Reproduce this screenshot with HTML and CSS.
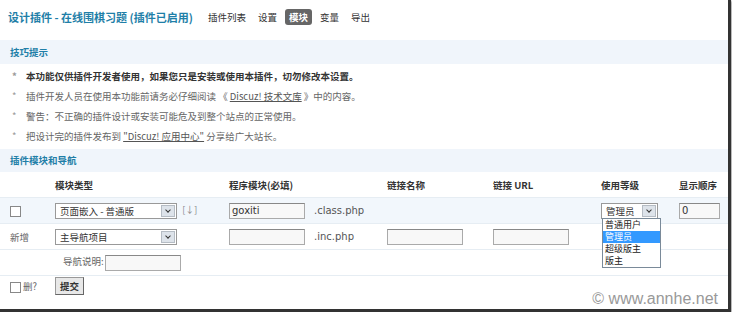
FILE: index.html
```html
<!DOCTYPE html>
<html lang="zh-CN">
<head>
  <meta charset="UTF-8" />
  <title>设计插件 - 在线围棋习题</title>
  <link rel="stylesheet" href="styles.css">
</head>
<body>
  <div class="frame">
    <div class="topbar">
      <h3 class="page-title">设计插件 - 在线围棋习题 (插件已启用)</h3>
      <ul class="tabs">
        <li>插件列表</li>
        <li>设置</li>
        <li class="current">模块</li>
        <li>变量</li>
        <li>导出</li>
      </ul>
    </div>

    <div class="band">技巧提示</div>
    <ul class="tips">
      <li class="strong">本功能仅供插件开发者使用，如果您只是安装或使用本插件，切勿修改本设置。</li>
      <li>插件开发人员在使用本功能前请务必仔细阅读 《 <a href="#">Discuz! 技术文库</a> 》中的内容。</li>
      <li>警告：不正确的插件设计或安装可能危及到整个站点的正常使用。</li>
      <li>把设计完的插件发布到 <a href="#">"Discuz! 应用中心"</a> 分享给广大站长。</li>
    </ul>

    <div class="band">插件模块和导航</div>
    <table class="modules">
      <colgroup>
        <col class="c-check"><col class="c-type"><col class="c-prog"><col class="c-name"><col class="c-url"><col class="c-level"><col class="c-order">
      </colgroup>
      <tr class="head">
        <th></th>
        <th>模块类型</th>
        <th>程序模块(必填)</th>
        <th>链接名称</th>
        <th>链接 URL</th>
        <th>使用等级</th>
        <th>显示顺序</th>
      </tr>
      <tr class="row hover">
        <td class="first"><span class="checkbox"></span></td>
        <td><span class="select wide">页面嵌入 - 普通版<span class="arrow"></span></span> <span class="order">[↓]</span></td>
        <td><span class="input">goxiti</span><span class="ext">.class.php</span></td>
        <td></td>
        <td></td>
        <td class="level-cell">
          <span class="select small">管理员<span class="arrow"></span></span>
          <ul class="droplist">
            <li>普通用户</li>
            <li class="picked">管理员</li>
            <li>超级版主</li>
            <li>版主</li>
          </ul>
        </td>
        <td><span class="input tiny">0</span></td>
      </tr>
      <tr class="row">
        <td class="first gray">新增</td>
        <td><span class="select wide">主导航项目<span class="arrow"></span></span></td>
        <td><span class="input"></span><span class="ext">.inc.php</span></td>
        <td><span class="input"></span></td>
        <td><span class="input"></span></td>
        <td></td>
        <td></td>
      </tr>
      <tr class="row">
        <td></td>
        <td class="navdesc"><span class="gray">导航说明:</span><span class="input"></span></td>
        <td></td><td></td><td></td><td></td><td></td>
      </tr>
      <tr class="foot">
        <td class="first"><span class="checkbox"></span><span class="gray">删?</span></td>
        <td><span class="button">提交</span></td>
        <td></td><td></td><td></td><td></td><td></td>
      </tr>
    </table>
    <div class="watermark">© www.annhe.net</div>
  </div>
</body>
</html>
```

FILE: styles.css
```css
body {
  margin: 0;
  background: #fff;
  font-family: "Noto Sans CJK SC", "DejaVu Sans", sans-serif;
  font-size: 9.5px;
  color: #333;
}
.frame {
  position: relative;
  width: 728px;
  height: 309px;
  border-right: 3px solid #333;
  border-bottom: 3px solid #333;
  box-shadow: 1px 1px 2px rgba(0,0,0,0.4);
  overflow: hidden;
}
.topbar {
  display: flex;
  align-items: center;
  height: 34px;
  padding: 0 8px;
  margin-bottom: 6px;
}
.page-title {
  margin: 0 11px 0 0;
  font-size: 11px;
  font-weight: bold;
  color: #1f7fa8;
}
.tabs {
  display: flex;
  gap: 4px;
  margin: 0;
  padding: 0;
  list-style: none;
}
.tabs li {
  padding: 1px 4px;
  border-radius: 3px;
  color: #333;
}
.tabs .current {
  background: #666;
  color: #fff;
  font-weight: bold;
}
.band {
  height: 24px;
  line-height: 24px;
  padding-left: 10px;
  background: #f0f5fb;
  color: #1f7fa8;
  font-weight: bold;
}
.tips + .band {
  height: 23px;
  line-height: 23px;
}
.tips {
  margin: 0;
  padding: 2px 0 3px 12px;
  list-style: none;
  color: #666;
}
.tips li {
  height: 20px;
  line-height: 20px;
}
.tips li::before {
  content: "*";
  display: inline-block;
  width: 14px;
  color: #999;
}
.tips .strong {
  color: #333;
  font-weight: bold;
}
.tips a {
  color: #555;
}
.modules {
  width: 728px;
  table-layout: fixed;
  border-collapse: collapse;
}
.c-check { width: 55px; }
.c-type { width: 174px; }
.c-prog { width: 158px; }
.c-name { width: 106px; }
.c-url { width: 108px; }
.c-level { width: 78px; }
.c-order { width: 49px; }
.modules th, .modules td {
  padding: 0;
  text-align: left;
  white-space: nowrap;
}
.modules th {
  height: 25px;
  font-weight: bold;
  border-bottom: 1px solid #e6edf3;
}
.modules .first {
  padding-left: 10px;
}
.row td {
  height: 25px;
  border-bottom: 1px solid #e6edf3;
}
.row.hover td {
  background: #f2f7fc;
}
.foot td {
  height: 20px;
}
.gray {
  color: #666;
}
.checkbox {
  display: inline-block;
  width: 9px;
  height: 9px;
  border: 1px solid #888;
  background: #fff;
  vertical-align: middle;
  margin-right: 2px;
}
.select {
  position: relative;
  display: inline-block;
  box-sizing: border-box;
  height: 16px;
  line-height: 14px;
  padding-left: 4px;
  border: 1px solid #999;
  background: #fff;
  vertical-align: middle;
}
.select.wide { width: 122px; }
.select.small { width: 57px; }
.arrow {
  position: absolute;
  right: 1px;
  top: 1px;
  width: 14px;
  height: 12px;
  background: #dde3ea;
  border: 1px solid #b5bcc4;
  box-sizing: border-box;
}
.arrow::after {
  content: "";
  position: absolute;
  left: 4px;
  top: 2px;
  width: 3px;
  height: 3px;
  border-right: 1.5px solid #333;
  border-bottom: 1.5px solid #333;
  transform: rotate(45deg);
}
.order {
  margin-left: 3px;
  color: #888;
  font-size: 9px;
}
.input {
  display: inline-block;
  box-sizing: border-box;
  width: 76px;
  height: 16px;
  line-height: 14px;
  padding-left: 2px;
  border: 1px solid #aaa;
  border-top-color: #888;
  background: #f8f8f8;
  font-family: "DejaVu Sans", sans-serif;
  font-size: 10px;
  vertical-align: middle;
}
.input.tiny { width: 41px; }
.ext {
  margin-left: 9px;
  font-family: "DejaVu Sans", sans-serif;
  font-size: 10px;
  color: #555;
  vertical-align: middle;
}
.navdesc {
  padding-left: 8px !important;
}
.navdesc .input {
  margin-left: 1px;
}
.button {
  display: inline-block;
  padding: 0 4px;
  height: 16px;
  line-height: 16px;
  border: 1px solid #999;
  border-right-color: #666;
  border-bottom-color: #666;
  background: #e8e8e8;
  font-weight: bold;
  color: #333;
}
.level-cell {
  position: relative;
}
.droplist {
  position: absolute;
  left: 1px;
  top: 20px;
  width: 57px;
  margin: 0;
  padding: 0;
  list-style: none;
  border: 1px solid #7a8a99;
  background: #fff;
  z-index: 2;
}
.droplist li {
  height: 12px;
  line-height: 12px;
  padding-left: 2px;
  font-size: 9px;
  color: #222;
}
.droplist .picked {
  background: #3399ff;
  color: #fff;
}
.watermark {
  position: absolute;
  right: 10px;
  bottom: 1px;
  font-family: "Liberation Sans", Arial, sans-serif;
  font-size: 16px;
  color: #999;
}
```
